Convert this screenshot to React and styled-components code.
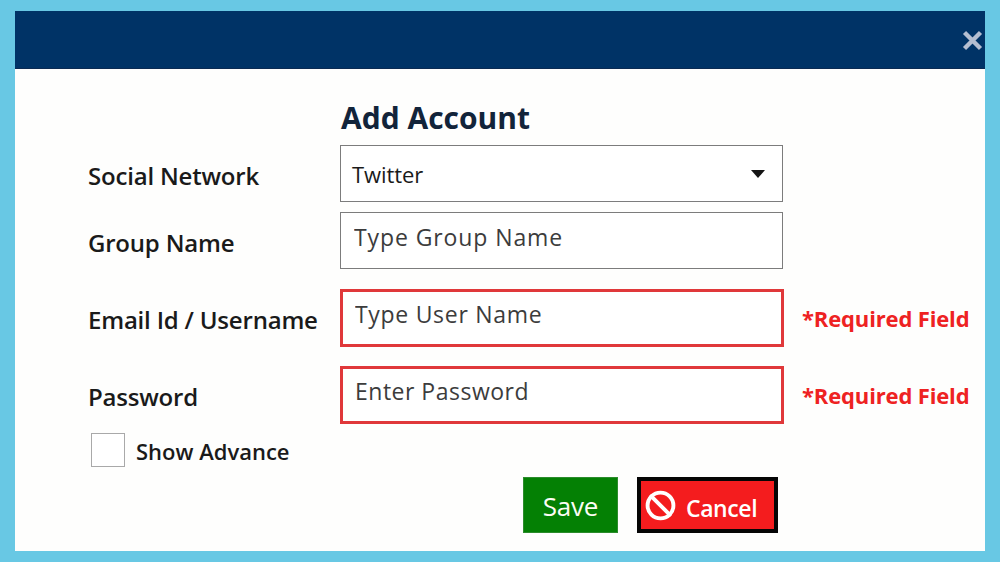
import React from 'react';
import styled, { createGlobalStyle } from 'styled-components';
import { Ban } from 'lucide-react';

const FONT = '"Open Sans", "Noto Sans", "Liberation Sans", sans-serif';

const GlobalStyle = createGlobalStyle`
  html, body { margin: 0; padding: 0; height: 100%; background: #68c8e4; }
  * { box-sizing: border-box; }
  #root { height: 100%; }
`;

const Page = styled.div`
  width: 1000px; height: 562px; padding: 11px 15px; background: #68c8e4; font-family: ${FONT}; overflow: hidden;
`;
const Modal = styled.section`
  height: 540px; background: #fefefd; display: flex; flex-direction: column;
`;
const Header = styled.header`
  height: 58px; flex: none; background: #003366; border-bottom: 1px solid #0b2a52; display: flex; justify-content: flex-end; align-items: flex-start; padding: 19px 2px 0 0;
`;
const CloseIcon = styled.svg`
  width: 21px; height: 21px; display: block;
`;
const Body = styled.div`
  padding: 30px 0 0 73px; display: flex; flex-direction: column;
`;
const Title = styled.h2`
  margin: 0 0 8px 253px; font-size: 30px; line-height: 38px; font-weight: 700; color: #12243a;
`;
const Form = styled.div`
  display: grid; grid-template-columns: 252px 443px 1fr; align-items: start;
`;
const Label = styled.label`
  margin-top: 16px; font-size: 24px; line-height: 30px; font-weight: 600; color: #1a1a1a; letter-spacing: -0.2px; white-space: nowrap;
`;
const Field = styled.div`
  height: ${p => p.$required ? 58 : 57}px; width: ${p => p.$required ? 'calc(100% + 1px)' : '100%'}; margin-bottom: ${p => p.$gap}px; border: ${p => p.$required ? '3px solid #e0383a' : '1px solid #7c7c7c'}; background: #fff; display: flex; align-items: center; justify-content: space-between;
  padding: ${p => p.$required ? '0 0 8px 12px' : '0 0 7px 13px'};
`;
const Input = styled.input`
  border: 0; outline: 0; background: transparent; width: 100%; padding: 0; font-family: ${FONT}; font-size: 23px; letter-spacing: ${p => p.$spacing}px; color: #3c3c3c;
  &::placeholder { color: #3c3c3c; opacity: 1; }
`;
const SelectBox = styled.div`
  height: 57px; margin-bottom: ${p => p.$gap}px; border: 1px solid #7c7c7c; background: #fff; display: flex; align-items: center; justify-content: space-between; padding: 1px 17px 0 11px;
`;
const SelectValue = styled.span`
  font-size: 22px; letter-spacing: -0.1px; color: #1a1a1a;
`;
const Caret = styled.span`
  width: 0; height: 0; border-left: 7px solid transparent; border-right: 7px solid transparent; border-top: 8px solid #141414;
`;
const Note = styled.span`
  margin-top: 14px; font-size: 22px; line-height: 30px; font-weight: 700; color: #ee2222; padding-left: 19px; white-space: nowrap; letter-spacing: -0.15px;
`;
const CheckRow = styled.div`
  display: flex; align-items: center; gap: 11px; margin: 9px 0 0 3px;
`;
const Checkbox = styled.span`
  width: 34px; height: 34px; border: 1px solid #a9a9a9; background: #fff; display: block;
`;
const CheckLabel = styled.span`
  font-size: 22px; font-weight: 600; color: #1a1a1a; padding-top: 2px;
`;
const Actions = styled.div`
  display: flex; gap: 19px; margin: 10px 0 0 435px;
`;
const SaveButton = styled.button`
  width: 95px; height: 56px; border: 1px solid #2c8c2c; background: #048004; color: #fdfdf5; font-family: ${FONT}; font-size: 26px; font-weight: 500; padding: 2px 0 0; letter-spacing: -0.2px;
`;
const CancelButton = styled.button`
  width: 141px; height: 56px; border: 4px solid #050505; background: #f41c1e; color: #fff; font-family: ${FONT}; font-size: 23px; font-weight: 600; display: flex; align-items: center; gap: 10px; padding: 0 0 0 4px; letter-spacing: -0.4px;
`;
const CancelText = styled.span`
  padding-top: 6px;
`;

const rows = [
  { label: 'Social Network', gap: 10, select: 'Twitter' },
  { label: 'Group Name', gap: 20, placeholder: 'Type Group Name', spacing: 0.9 },
  { label: 'Email Id / Username', gap: 19, placeholder: 'Type User Name', spacing: 0.7, required: true },
  { label: 'Password', gap: 0, placeholder: 'Enter Password', spacing: 0.5, required: true },
];

export default function App() {
  return (
    <Page>
      <GlobalStyle />
      <Modal>
        <Header>
          <CloseIcon viewBox="0 0 21 21" aria-label="Close">
            <path d="M2.5 2.5 L18.5 18.5 M18.5 2.5 L2.5 18.5" stroke="#b4bed0" strokeWidth="4.4" fill="none" />
          </CloseIcon>
        </Header>
        <Body>
          <Title>Add Account</Title>
          <Form>
            {rows.map(row => (
              <React.Fragment key={row.label}>
                <Label>{row.label}</Label>
                {row.select ? (
                  <SelectBox $gap={row.gap}>
                    <SelectValue>{row.select}</SelectValue>
                    <Caret />
                  </SelectBox>
                ) : (
                  <Field $required={row.required} $gap={row.gap}>
                    <Input placeholder={row.placeholder} $spacing={row.spacing} />
                  </Field>
                )}
                {row.required ? <Note>*Required Field</Note> : <span />}
              </React.Fragment>
            ))}
          </Form>
          <CheckRow>
            <Checkbox />
            <CheckLabel>Show Advance</CheckLabel>
          </CheckRow>
          <Actions>
            <SaveButton>Save</SaveButton>
            <CancelButton>
              <Ban size={31} strokeWidth={3} color="#fff" />
              <CancelText>Cancel</CancelText>
            </CancelButton>
          </Actions>
        </Body>
      </Modal>
    </Page>
  );
}
